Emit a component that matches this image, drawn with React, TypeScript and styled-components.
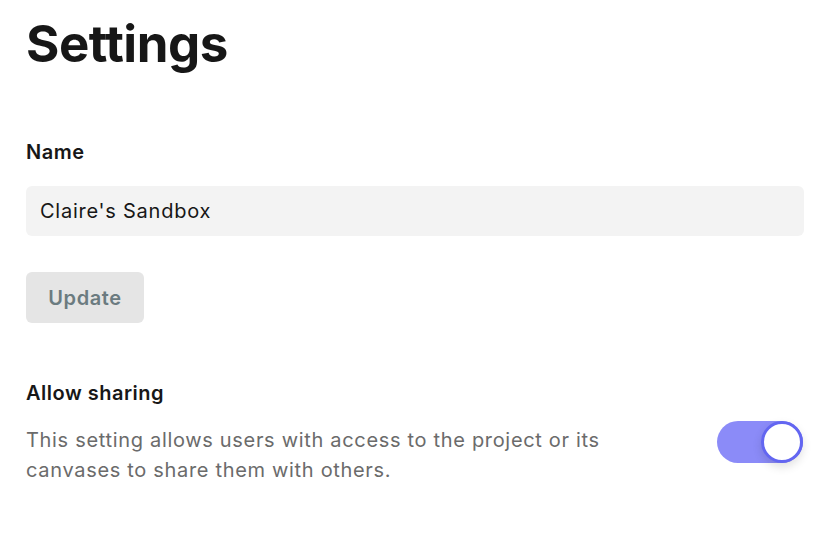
import React from 'react';
import styled, { createGlobalStyle } from 'styled-components';

const GlobalStyle = createGlobalStyle`
  html, body {
    margin: 0;
    padding: 0;
    background: #ffffff;
  }
  body {
    font-family: Inter, "Liberation Sans", sans-serif;
    color: #1a1a1a;
  }
`;

const Page = styled.div`
  padding: 12px 28px 0 26px;
  display: flex;
  flex-direction: column;
`;

const Title = styled.h1`
  margin: 0 0 62px;
  font-size: 51px;
  font-weight: 700;
  line-height: 64px;
  letter-spacing: -0.5px;
  color: #171717;
`;

const Label = styled.label`
  display: block;
  font-size: 20px;
  font-weight: 600;
  line-height: 28px;
  letter-spacing: 0.5px;
  color: #171717;
`;

const Section = styled.section<{ $gap?: number; $top?: number }>`
  display: flex;
  flex-direction: column;
  gap: ${p => p.$gap ?? 20}px;
  margin-top: ${p => p.$top ?? 0}px;
`;

const TextInput = styled.input`
  height: 50px;
  box-sizing: border-box;
  border: none;
  border-radius: 6px;
  background: #f3f3f3;
  padding: 0 14px;
  font-family: inherit;
  font-size: 20px;
  letter-spacing: 0.75px;
  color: #171717;
  outline: none;
`;

const Button = styled.button`
  align-self: flex-start;
  margin-top: 16px;
  width: 118px;
  height: 51px;
  border: none;
  border-radius: 6px;
  background: #e5e5e5;
  color: #6b7b80;
  font-family: inherit;
  font-size: 20px;
  font-weight: 600;
  letter-spacing: 0.6px;
  cursor: default;
`;

const ToggleRow = styled.div`
  display: flex;
  align-items: flex-start;
  justify-content: space-between;
  gap: 24px;
`;

const Description = styled.p`
  margin: 0;
  max-width: 620px;
  font-size: 20px;
  line-height: 30px;
  letter-spacing: 0.68px;
  color: #6b6b6b;
`;

const Track = styled.div<{ $on: boolean }>`
  position: relative;
  flex-shrink: 0;
  width: 86px;
  height: 42px;
  margin: -4px 1px 0 0;
  border-radius: 21px;
  background: ${p => (p.$on ? '#8b8bf8' : '#d4d4d4')};
`;

const Knob = styled.div<{ $on: boolean }>`
  position: absolute;
  top: 0;
  left: ${p => (p.$on ? '44px' : '0')};
  width: 42px;
  height: 42px;
  box-sizing: border-box;
  border-radius: 50%;
  background: #ffffff;
  border: 3px solid #6366f1;
  box-shadow: 0 4px 10px rgba(0, 0, 0, 0.12);
`;

export default function App() {
  return (
    <>
      <GlobalStyle />
      <Page>
        <Title>Settings</Title>
        <Section $gap={20}>
          <Label htmlFor="name">Name</Label>
          <TextInput id="name" defaultValue="Claire's Sandbox" />
          <Button>Update</Button>
        </Section>
        <Section $gap={18} $top={56}>
          <Label>Allow sharing</Label>
          <ToggleRow>
            <Description>
              This setting allows users with access to the project or its canvases to share them with others.
            </Description>
            <Track $on>
              <Knob $on />
            </Track>
          </ToggleRow>
        </Section>
      </Page>
    </>
  );
}
